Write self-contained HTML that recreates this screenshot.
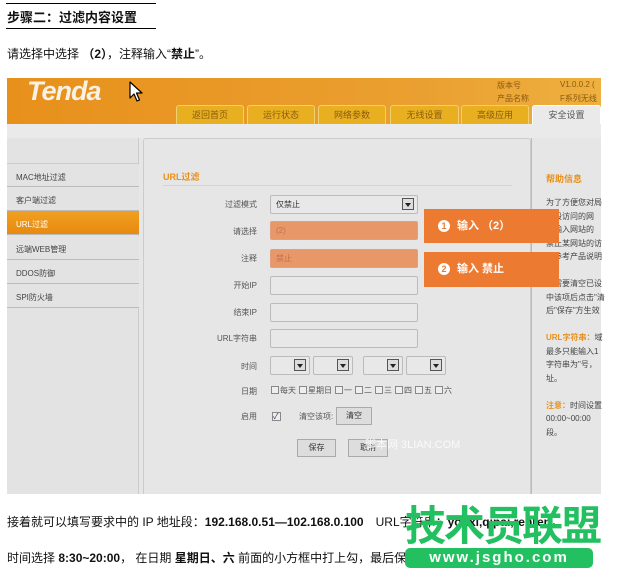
<!DOCTYPE html><html><head><meta charset="utf-8"><style>
*{margin:0;padding:0;box-sizing:border-box}
body{width:634px;height:572px;background:#fff;position:relative;overflow:hidden;font-family:"Liberation Sans","Noto Sans CJK SC",sans-serif;color:#111}
.a{position:absolute;white-space:nowrap}
.s{font-size:8px;color:#555}
.inp{position:absolute;left:270px;width:148px;height:19px;background:#e8e8e8;border:1px solid #bbb;border-radius:2px}
.lab{position:absolute;right:377px;font-size:8px;color:#555}
.side{position:absolute;left:7px;width:132px;height:24px;background:#e3e3e3;border-bottom:1px solid #bbb;font-size:8px;color:#444;padding:8px 0 0 9px}
.tab{position:absolute;top:105px;height:19px;background:#e8b020;border:1px solid #f0d070;border-bottom:none;border-radius:3px 3px 0 0;font-size:9px;color:#8a5a10;text-align:center;line-height:18px}
.dd{position:absolute;width:12px;height:12px;border:1px solid #555;background:#ddd}
.dd:after{content:"";position:absolute;left:2px;top:4px;border:3px solid transparent;border-top:4px solid #222}
.cb{display:inline-block;width:8px;height:8px;border:1px solid #888;background:#eee;margin:0 1px 0 3px;vertical-align:-1px}
.btn{position:absolute;height:18px;background:#ddd;border:1px solid #aaa;font-size:8px;text-align:center;line-height:16px;color:#333}
.call{position:absolute;left:424px;width:135px;background:#ec7a30;color:#fff;font-size:11px;font-weight:bold;padding-left:14px}
.num{display:inline-block;width:12px;height:12px;border-radius:50%;background:#fff;color:#ec7a30;font-size:9px;text-align:center;line-height:12px;margin-right:7px}
</style></head><body>
<div class="a" style="left:7px;top:7px;font-size:13px;font-weight:bold">步骤二：过滤内容设置</div>
<div class="a" style="left:6px;top:3px;width:150px;border-top:1px solid #000"></div>
<div class="a" style="left:6px;top:28px;width:150px;border-top:1px solid #000"></div>
<div class="a" style="left:7px;top:45px;font-size:12px">请选择中选择 <b>（2）</b>，注释输入“<b>禁止</b>”。</div>

<div class="a" style="left:7px;top:78px;width:594px;height:416px;background:#e6e6e6"></div>
<div class="a" style="left:7px;top:78px;width:594px;height:46px;background:linear-gradient(90deg,#e8901c,#eaa030 70%,#eeb040)"></div>
<div class="a" style="left:27px;top:76px;font-size:27px;font-style:italic;font-weight:bold;color:#f8f2e6;letter-spacing:-1px">Tenda</div>
<svg class="a" style="left:129px;top:81px" width="14" height="22" viewBox="0 0 14 22"><path d="M1 1 L1 17 L5 13 L8 20 L10.5 19 L7.5 12 L13 12 Z" fill="#fff" stroke="#000" stroke-width="1.2" stroke-linejoin="round"/></svg>
<div class="a s" style="left:497px;top:80px;color:#8a5a10">版本号</div>
<div class="a s" style="left:497px;top:93px;color:#8a5a10">产品名称</div>
<div class="a s" style="left:560px;top:80px;color:#8a5a10">V1.0.0.2 (</div>
<div class="a s" style="left:560px;top:93px;color:#8a5a10">F系列无线</div>
<div class="tab" style="left:176px;width:68px">返回首页</div>
<div class="tab" style="left:247px;width:68px">运行状态</div>
<div class="tab" style="left:318px;width:68px">网络参数</div>
<div class="tab" style="left:390px;width:69px">无线设置</div>
<div class="tab" style="left:461px;width:68px">高级应用</div>
<div class="tab" style="left:532px;width:69px;background:#eaeaea;color:#555;border-color:#fff">安全设置</div>
<div class="a" style="left:7px;top:124px;width:594px;height:14px;background:#eaeaea"></div>

<div class="a" style="left:7px;top:138px;width:132px;height:356px;background:#e3e3e3;border-right:1px solid #ccc"></div>
<div class="side" style="top:163px;border-top:1px solid #ccc">MAC地址过滤</div>
<div class="side" style="top:187px">客户端过滤</div>
<div class="side" style="top:211px;background:linear-gradient(#f0a020,#e88a10);color:#fff">URL过滤</div>
<div class="side" style="top:236px">远端WEB管理</div>
<div class="side" style="top:260px">DDOS防御</div>
<div class="side" style="top:284px">SPI防火墙</div>

<div class="a" style="left:143px;top:138px;width:388px;height:356px;border:1px solid #ccc;border-bottom:none;border-radius:3px 3px 0 0"></div>
<div class="a" style="left:531px;top:138px;width:1px;height:356px;background:#bbb"></div>
<div class="a" style="left:163px;top:170px;font-size:9px;font-weight:bold;color:#e8901c">URL过滤</div>
<div class="a" style="left:163px;top:185px;width:349px;border-top:1px solid #d4d4d4"></div>

<div class="lab" style="top:199px">过滤模式</div><div class="inp" style="top:195px;width:148px"></div><div class="a s" style="left:276px;top:199px;color:#333">仅禁止</div><div class="dd" style="left:402px;top:198px"></div>
<div class="lab" style="top:226px">请选择</div><div class="inp" style="top:221px;background:#e89868;border-color:#e0a080"></div><div class="a s" style="left:276px;top:226px;color:#c07050">(2)</div>
<div class="lab" style="top:253px">注释</div><div class="inp" style="top:249px;background:#e89868;border-color:#e0a080"></div><div class="a s" style="left:276px;top:253px;color:#c07050">禁止</div>
<div class="lab" style="top:280px">开始IP</div><div class="inp" style="top:276px"></div>
<div class="lab" style="top:307px">结束IP</div><div class="inp" style="top:303px"></div>
<div class="lab" style="top:333px">URL字符串</div><div class="inp" style="top:329px"></div>
<div class="lab" style="top:361px">时间</div>
<div class="inp" style="top:356px;width:40px"></div><div class="dd" style="left:294px;top:359px"></div>
<div class="inp" style="top:356px;left:313px;width:40px"></div><div class="dd" style="left:337px;top:359px"></div>
<div class="inp" style="top:356px;left:363px;width:40px"></div><div class="dd" style="left:387px;top:359px"></div>
<div class="inp" style="top:356px;left:406px;width:40px"></div><div class="dd" style="left:430px;top:359px"></div>
<div class="lab" style="top:386px">日期</div>
<div class="a s" style="left:268px;top:385px"><span class="cb"></span>每天<span class="cb"></span>星期日<span class="cb"></span>一<span class="cb"></span>二<span class="cb"></span>三<span class="cb"></span>四<span class="cb"></span>五<span class="cb"></span>六</div>
<div class="lab" style="top:411px">启用</div><div class="a" style="left:272px;top:412px;width:9px;height:9px;border:1px solid #888;background:#eee;font-size:8px;line-height:8px;color:#336">✓</div>
<div class="a s" style="left:299px;top:411px">清空该项:</div><div class="btn" style="left:336px;top:407px;width:36px">清空</div>
<div class="btn" style="left:297px;top:439px;width:39px">保存</div><div class="btn" style="left:348px;top:439px;width:40px">取消</div>
<div class="a" style="left:365px;top:436px;font-size:11px;color:#fafafa">脚本网 3LIAN.COM</div>

<div class="a" style="left:546px;top:172px;font-size:9px;font-weight:bold;color:#e8901c">帮助信息</div>
<div class="a s" style="left:546px;top:196px;line-height:13.5px;color:#444">为了方便您对局<br>时段访问的网<br>以输入网站的<br>禁止某网站的访<br>请参考产品说明<br><br>如需要清空已设<br>中该项后点击"清<br>后"保存"方生效<br><br><b style="color:#e8901c">URL字符串：</b>域<br>最多只能输入1<br>字符串为"号，<br>址。<br><br><b style="color:#e8901c">注意：</b>时间设置<br>00:00~00:00<br>段。</div>

<div class="call" style="top:209px;height:34px;line-height:34px"><span class="num">1</span>输入 （2）</div>
<div class="call" style="top:252px;height:35px;line-height:35px"><span class="num">2</span>输入 禁止</div>

<div class="a" style="left:7px;top:513px;font-size:12px">接着就可以填写要求中的 IP 地址段：<b>192.168.0.51—102.168.0.100</b>　URL字符串：<b>youxi,qipai,renren</b>，</div>
<div class="a" style="left:7px;top:549px;font-size:12px">时间选择 <b>8:30~20:00</b>， 在日期 <b>星期日、六</b> 前面的小方框中打上勾，最后保存</div>
<div class="a" style="left:405px;top:502px;font-size:41px;font-weight:bold;color:#22c060;letter-spacing:-2px;line-height:48px">技术员联盟</div>
<div class="a" style="left:405px;top:548px;width:188px;height:20px;background:#22c060;border-radius:5px;color:#fff;font-size:15px;font-weight:bold;text-align:center;line-height:20px;letter-spacing:2px">www.jsgho.com</div>
</body></html>
